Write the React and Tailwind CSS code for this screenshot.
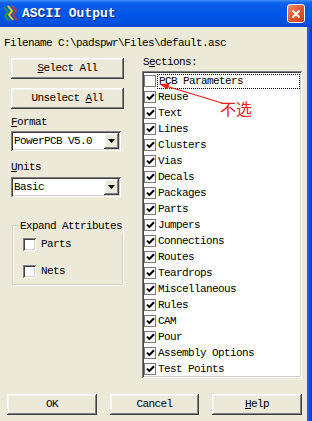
import React from "react";

const MONO = "font-['Liberation_Mono',monospace] text-[11px] tracking-[-0.6px]";

const SECTIONS = [
  ["PCB Parameters", false],
  ["Reuse", true],
  ["Text", true],
  ["Lines", true],
  ["Clusters", true],
  ["Vias", true],
  ["Decals", true],
  ["Packages", true],
  ["Parts", true],
  ["Jumpers", true],
  ["Connections", true],
  ["Routes", true],
  ["Teardrops", true],
  ["Miscellaneous", true],
  ["Rules", true],
  ["CAM", true],
  ["Pour", true],
  ["Assembly Options", true],
  ["Test Points", true],
];

const raised =
  "shadow-[inset_-1px_-1px_#404040,inset_1px_1px_#ffffff,inset_-2px_-2px_#808080,inset_2px_2px_#f4f3ee]";
const sunken =
  "shadow-[inset_1px_1px_#808080,inset_-1px_-1px_#ffffff,inset_2px_2px_#404040,inset_-2px_-2px_#d4d0c8]";

const Button = ({ children, className = "" }) => (
  <div
    className={`flex items-center justify-center bg-[#ece9d8] ${raised} ${className}`}
  >
    {children}
  </div>
);

const Combo = ({ value }) => (
  <div className={`flex h-[20px] w-[110px] items-center bg-white p-[2px] ${sunken}`}>
    <span className="flex-1 pl-[1px] leading-[16px]">{value}</span>
    <div className={`flex h-[16px] w-[15px] items-center justify-center bg-[#ece9d8] ${raised}`}>
      <svg width="7" height="4" viewBox="0 0 7 4">
        <polygon points="0,0 7,0 3.5,4" fill="#000" />
      </svg>
    </div>
  </div>
);

const Check = ({ checked, flat }) => (
  <div
    className={`flex h-[12px] w-[12px] shrink-0 items-center justify-center bg-white ${
      flat ? "border border-[#7a7a7a]" : sunken + " h-[13px] w-[13px]"
    }`}
  >
    {checked && (
      <svg width="9" height="8" viewBox="0 0 9 8">
        <path d="M1 3.6 L3.4 6 L8 1.2" stroke="#000" strokeWidth="2" fill="none" />
      </svg>
    )}
  </div>
);

const AppIcon = () => (
  <svg width="15" height="17" viewBox="0 0 15 17">
    <path d="M1 2 L5 7 L2 11 L6 16" stroke="#1f9a3a" strokeWidth="2" fill="none" />
    <path d="M5 1 L9 6 L6 10 L10 15" stroke="#e8d21a" strokeWidth="2" fill="none" />
    <path d="M9 1 L13 6 L10 10 L14 15" stroke="#d83a20" strokeWidth="1.6" fill="none" />
  </svg>
);

export default function App() {
  return (
    <div className={`flex h-[421px] w-[312px] flex-col overflow-hidden bg-[#ece9d8] text-black ${MONO}`}>
      {/* Title bar */}
      <div className="flex h-[27px] shrink-0 items-center bg-[linear-gradient(to_bottom,#3d8cf7_0%,#0a5ee8_12%,#0055e5_60%,#0050e0_88%,#003fc8_100%)] pl-[3px] pr-[7px]">
        <AppIcon />
        <span className="ml-[4px] flex-1 font-['Liberation_Mono',monospace] text-[13px] font-bold tracking-[0px] text-white [text-shadow:1px_1px_#0a246a]">
          ASCII Output
        </span>
        <div className="flex h-[19px] w-[18px] items-center justify-center rounded-[3px] border border-white bg-[linear-gradient(135deg,#f0906c_0%,#e0582e_50%,#c6401c_100%)]">
          <svg width="10" height="10" viewBox="0 0 10 10">
            <path d="M1.5 1.5 L8.5 8.5 M8.5 1.5 L1.5 8.5" stroke="#fff" strokeWidth="2" />
          </svg>
        </div>
      </div>

      <div className="flex flex-1">
        <div className="flex flex-1 flex-col">
          <div className="pl-[4px] pt-[8px] leading-[16px]">Filename C:\padspwr\Files\default.asc</div>

          <div className="mt-[3px] flex pl-[11px]">
            {/* Left column */}
            <div className="flex w-[113px] flex-col pt-[4px]">
              <Button className="h-[21px]">
                <span>
                  <span className="underline">S</span>elect All
                </span>
              </Button>
              <Button className="mt-[9px] h-[21px]">
                <span>
                  Unselect <span className="underline">A</span>ll
                </span>
              </Button>
              <div className="mt-[5px] h-[16px] leading-[16px]">
                <span className="underline">F</span>ormat
              </div>
              <div className="mt-[1px]">
                <Combo value="PowerPCB V5.0" />
              </div>
              <div className="mt-[8px] h-[16px] leading-[16px]">
                <span className="underline">U</span>nits
              </div>
              <div className="mt-[2px]">
                <Combo value="Basic" />
              </div>

              <div className="relative ml-[1px] mt-[28px] h-[60px] w-[111px] border border-[#d0d0bf] shadow-[inset_1px_1px_#ffffff,1px_1px_#ffffff]">
                <span className="absolute -top-[8px] left-[6px] whitespace-nowrap bg-[#ece9d8] px-[1px] leading-[16px]">
                  Expand Attributes
                </span>
                <div className="flex flex-col gap-[14px] pl-[10px] pt-[12px]">
                  <div className="flex items-center gap-[5px]">
                    <Check />
                    <span className="leading-[13px]">Parts</span>
                  </div>
                  <div className="flex items-center gap-[5px]">
                    <Check />
                    <span className="leading-[13px]">Nets</span>
                  </div>
                </div>
              </div>
            </div>

            {/* Right column */}
            <div className="relative ml-[18px] flex w-[160px] flex-col">
              <div className="h-[16px] pl-[1px] leading-[16px]">
                S<span className="underline">e</span>ctions:
              </div>
              <div className={`mt-[1px] h-[307px] bg-white p-[2px] ${sunken}`}>
                {SECTIONS.map(([name, checked], i) => (
                  <div key={name} className="flex h-[16px] items-center">
                    <Check checked={checked} flat />
                    <span
                      className={`ml-[1px] flex h-[15px] flex-1 items-center pl-[1px] ${
                        i === 0 ? "border border-dotted border-black" : ""
                      }`}
                    >
                      {name}
                    </span>
                  </div>
                ))}
              </div>

              {/* annotation */}
              <svg className="absolute left-0 top-0" width="160" height="70" viewBox="0 0 160 70">
                <line x1="24" y1="32" x2="80" y2="49" stroke="#e8201a" strokeWidth="1.2" />
                <polygon points="17,30 25.6,35.6 27.4,29.4" fill="#e8201a" />
              </svg>
              <span className="absolute left-[78px] top-[45px] font-['Noto_Sans_CJK_SC',sans-serif] text-[16px] leading-[18px] tracking-[0px] text-[#e8201a]">
                不选
              </span>
            </div>
          </div>

          <div className="mt-auto flex gap-[13px] pb-[6px] pl-[7px]">
            <Button className="h-[21px] w-[90px]">OK</Button>
            <Button className="h-[21px] w-[89px]">Cancel</Button>
            <Button className="h-[21px] w-[90px]">
              <span>
                <span className="underline">H</span>elp
              </span>
            </Button>
          </div>
        </div>
        <div className="w-[5px] bg-[linear-gradient(to_right,#166aee,#0a4fe0_60%,#0831d9)]" />
      </div>
    </div>
  );
}
